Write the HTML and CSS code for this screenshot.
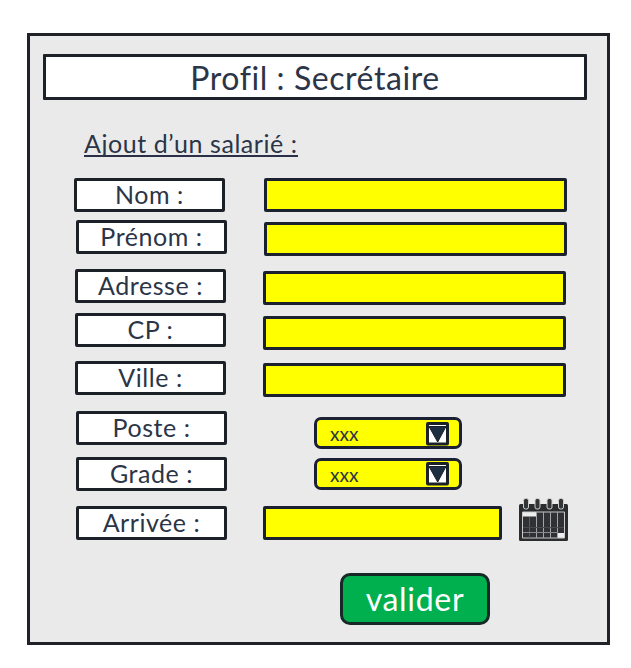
FILE: index.html
```html
<!DOCTYPE html>
<html lang="fr">
<head>
<meta charset="utf-8">
<title>Profil : Secrétaire</title>
<link rel="stylesheet" href="styles.css">
</head>
<body>
<main class="frame">
  <h1 class="title">Profil : Secrétaire</h1>
  <h2 class="subtitle">Ajout d’un salarié :</h2>
  <form class="form">
    <div class="row nom"><div class="label">Nom :</div><div class="field"></div></div>
    <div class="row prenom"><div class="label">Prénom :</div><div class="field"></div></div>
    <div class="row adresse"><div class="label">Adresse :</div><div class="field"></div></div>
    <div class="row cp"><div class="label">CP :</div><div class="field"></div></div>
    <div class="row ville"><div class="label">Ville :</div><div class="field"></div></div>
    <div class="row poste"><div class="label">Poste :</div>
      <div class="select"><span>xxx</span><svg class="arrow" width="23" height="24" viewBox="0 0 23 24"><rect x="1.5" y="1.5" width="20" height="20.5" rx=".5" fill="#fff" stroke="#1b2029" stroke-width="3"/><path d="M3 4.5H20L11.700 20Z" fill="#1f2d40" stroke="#18202b"/></svg></div>
    </div>
    <div class="row grade"><div class="label">Grade :</div>
      <div class="select"><span>xxx</span><svg class="arrow" width="23" height="24" viewBox="0 0 23 24"><rect x="1.5" y="1.5" width="20" height="20.5" rx=".5" fill="#fff" stroke="#1b2029" stroke-width="3"/><path d="M3 4.5H20L11.700 20Z" fill="#1f2d40" stroke="#18202b"/></svg></div>
    </div>
    <div class="row arrivee"><div class="label">Arrivée :</div><div class="field short"></div>
      <svg class="calendar" width="49" height="45" viewBox="0 0 49 45">
        <rect y="6" width="49" height="37" rx="1.5" fill="#2b2c2e"/>
        <path d="M3 14H46V35H39V40H3Z" fill="#303134"/>
        <path d="M3 14H17V18.500H3Z M39 35H45V40H39Z" fill="#eee"/>
        <path d="M3.500 14V40H45.500V14Z" fill="none" stroke="#c9c9ca"/>
        <path d="M17.500 14V40M24.500 14V40M31.500 14V40M38.500 14V40" stroke="#a4a4a6"/>
        <path d="M10.500 19V40" stroke="#5b5c5e"/>
        <path d="M4 34.500H39" stroke="#8a8a8c"/>
        <path d="M4 29.500H45" stroke="#48494b"/>
        <g fill="#333436" stroke="#d0d0d1"><rect x="4.500" y=".5" width="5" height="10.500" rx="2"/><rect x="16" y=".5" width="5" height="10.500" rx="2"/><rect x="28" y=".5" width="5" height="10.500" rx="2"/><rect x="39.500" y=".5" width="5" height="10.500" rx="2"/></g>
      </svg>
    </div>
    <button class="submit" type="button">valider</button>
  </form>
</main>
</body>
</html>
```
FILE: styles.css
```css
* { box-sizing: border-box; }
body { margin: 0; background: #fff; color: #2b3547; font-family: Lato, "Open Sans", sans-serif; font-variant-ligatures: none; }
.frame { width: 583px; height: 612px; margin: 33px 0 0 27px; padding: 18px 13px 0; border: 3px solid #202228; background: #eaeaea; }
.title { width: 544px; height: 46px; margin: 0; border: 3px solid #1d2128; border-radius: 1px; background: #fff; font-size: 32px; font-weight: 400; line-height: 41px; letter-spacing: .56px; text-align: center; }
.subtitle { width: fit-content; height: 27px; margin: 30px 0 0 41px; border-bottom: 2px solid #2b3048; font-size: 25px; font-weight: 400; line-height: 26px; letter-spacing: .55px; white-space: nowrap; }
.form { margin: 21px 0 0 31px; }
.row { display: flex; align-items: flex-start; height: 34px; }
.label { width: 151px; height: 34px; border: 3px solid #1c2027; border-radius: 2px; background: #fff; font-size: 25px; line-height: 26px; letter-spacing: .55px; text-align: center; white-space: nowrap; }
.field { width: 303px; height: 34px; margin-left: 37px; border: 3px solid #1c2130; border-radius: 2px; background: #ff0; }
.nom .field { margin-left: 39px; }
.prenom { margin: 8px 0 0 2px; }
.prenom .field { margin-top: 2px; }
.adresse { margin: 15px 0 0 1px; }
.adresse .field, .ville .field { margin-top: 2px; }
.cp { margin: 10px 0 0 1px; }
.cp .field { margin-top: 3px; }
.ville { margin: 14px 0 0 1px; }
.poste { margin: 16px 0 0 2px; }
.grade { margin: 12px 0 0 2px; }
.arrivee { margin: 15px 0 0 2px; }
.field.short { width: 239px; margin-left: 36px; }
.select { display: flex; justify-content: space-between; width: 148px; height: 32px; margin: 6px 0 0 87px; padding: 2px 10px 0 13px; border: 3px solid #1b2035; border-radius: 7px; background: #ff0; font-size: 19px; line-height: 23px; }
.grade .select { margin-top: 1px; }
.grade .arrow { margin-top: -1px; }
.calendar { margin: -8px 0 0 17px; }
.submit { display: block; width: 150px; height: 52px; margin: 33px 0 0 266px; padding: 0; border: 3px solid #172927; border-radius: 10px; background: #00b04f; color: #fff; font: 32px/46px Lato, "Open Sans", sans-serif; letter-spacing: .7px; text-align: center; }
```
